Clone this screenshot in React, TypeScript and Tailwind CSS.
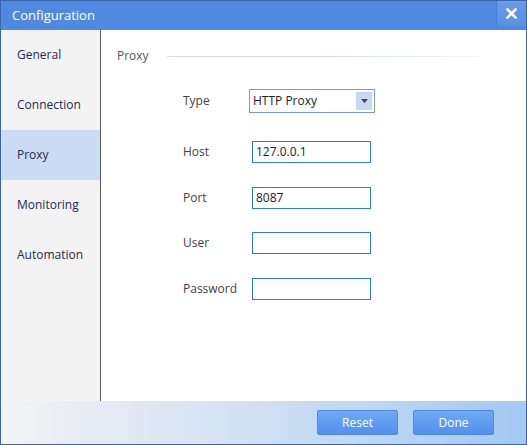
import React, { useState } from 'react';

const navItems = ['General', 'Connection', 'Proxy', 'Monitoring', 'Automation'];

// Text field with the thin blue Windows-style border
const Field: React.FC<{ value?: string }> = ({ value = '' }) => (
  <div className="w-[119px] h-[22px] border border-[#2f7fbf] bg-white flex items-center px-[3px] text-[12px] text-[#222]">
    {value}
  </div>
);

const Row: React.FC<{ label: string; children: React.ReactNode }> = ({ label, children }) => (
  <div className="flex items-center h-[22px]">
    <span className="w-[69px] text-[12px] text-[#444]">{label}</span>
    {children}
  </div>
);

export default function App() {
  const [active, setActive] = useState('Proxy');

  return (
    <div
      className="w-[527px] h-[445px] flex flex-col bg-white border border-[#3a66ad] overflow-hidden"
      style={{ fontFamily: '"Open Sans", "Noto Sans", sans-serif' }}
    >
      {/* Title bar */}
      <div className="h-[29px] shrink-0 bg-[#5289e0] flex items-center justify-between">
        <span className="pl-[11px] text-[13px] text-white">Configuration</span>
        <div className="w-[30px] h-[25px] self-start bg-gradient-to-b from-[#6b9ae6] to-[#5a8fe2] border-l border-[#4a7fd3] flex items-center justify-center">
          <svg width="11" height="11" viewBox="0 0 11 11">
            <path d="M1.5 1.5 L9.5 9.5 M9.5 1.5 L1.5 9.5" stroke="white" strokeWidth="2.6" strokeLinecap="square" />
          </svg>
        </div>
      </div>

      <div className="flex flex-1 min-h-0">
        {/* Sidebar */}
        <div className="w-[100px] shrink-0 bg-[#f3f3f3] border-r border-[#5a5a5a]">
          {navItems.map((item) => (
            <div
              key={item}
              onClick={() => setActive(item)}
              className={
                'h-[50px] flex items-center pl-[16px] pb-[1px] text-[12px] text-[#1e2a50] cursor-pointer ' +
                (active === item ? 'bg-[#cbdcf5]' : '')
              }
            >
              {item}
            </div>
          ))}
        </div>

        {/* Content */}
        <div className="flex-1 pl-[16px] pt-[17px]">
          <div className="flex items-center">
            <span className="text-[12px] text-[#555]">Proxy</span>
            <div className="ml-[18px] h-px w-[314px] bg-gradient-to-r from-[#d5dde8] via-[#d5dde8] to-[#f6f7f9]" />
          </div>

          <div className="pl-[66px] pt-[24px] flex flex-col">
            <div className="flex items-center h-[24px]">
              <span className="w-[66px] text-[12px] text-[#444]">Type</span>
              <div className="w-[126px] h-[24px] border border-[#7a9cc4] flex items-center justify-between pl-[3px] pr-[2px] text-[12px] text-[#222]">
                HTTP Proxy
                <div className="w-[16px] h-[18px] bg-[#c8d8f8] flex items-center justify-center">
                  <svg width="7" height="4" viewBox="0 0 7 4">
                    <path d="M0 0 H7 L3.5 4 Z" fill="#444" />
                  </svg>
                </div>
              </div>
            </div>

            <div className="flex flex-col gap-[23.5px] mt-[28px]">
              <Row label="Host"><Field value="127.0.0.1" /></Row>
              <Row label="Port"><Field value="8087" /></Row>
              <Row label="User"><Field /></Row>
              <Row label="Password"><Field /></Row>
            </div>
          </div>
        </div>
      </div>

      {/* Footer */}
      <div className="h-[43px] shrink-0 bg-gradient-to-r from-[#f3f3f3] via-[#cfe0f3] to-[#a3c8f3] flex items-center justify-end gap-[15px] pr-[32px]">
        <button className="w-[81px] h-[25px] rounded-[2px] border border-[#4a8ae0] bg-gradient-to-b from-[#6eaaf6] to-[#5290ea] text-white text-[12px]">
          Reset
        </button>
        <button className="w-[81px] h-[25px] rounded-[2px] border border-[#4a8ae0] bg-gradient-to-b from-[#6eaaf6] to-[#5290ea] text-white text-[12px]">
          Done
        </button>
      </div>
    </div>
  );
}
